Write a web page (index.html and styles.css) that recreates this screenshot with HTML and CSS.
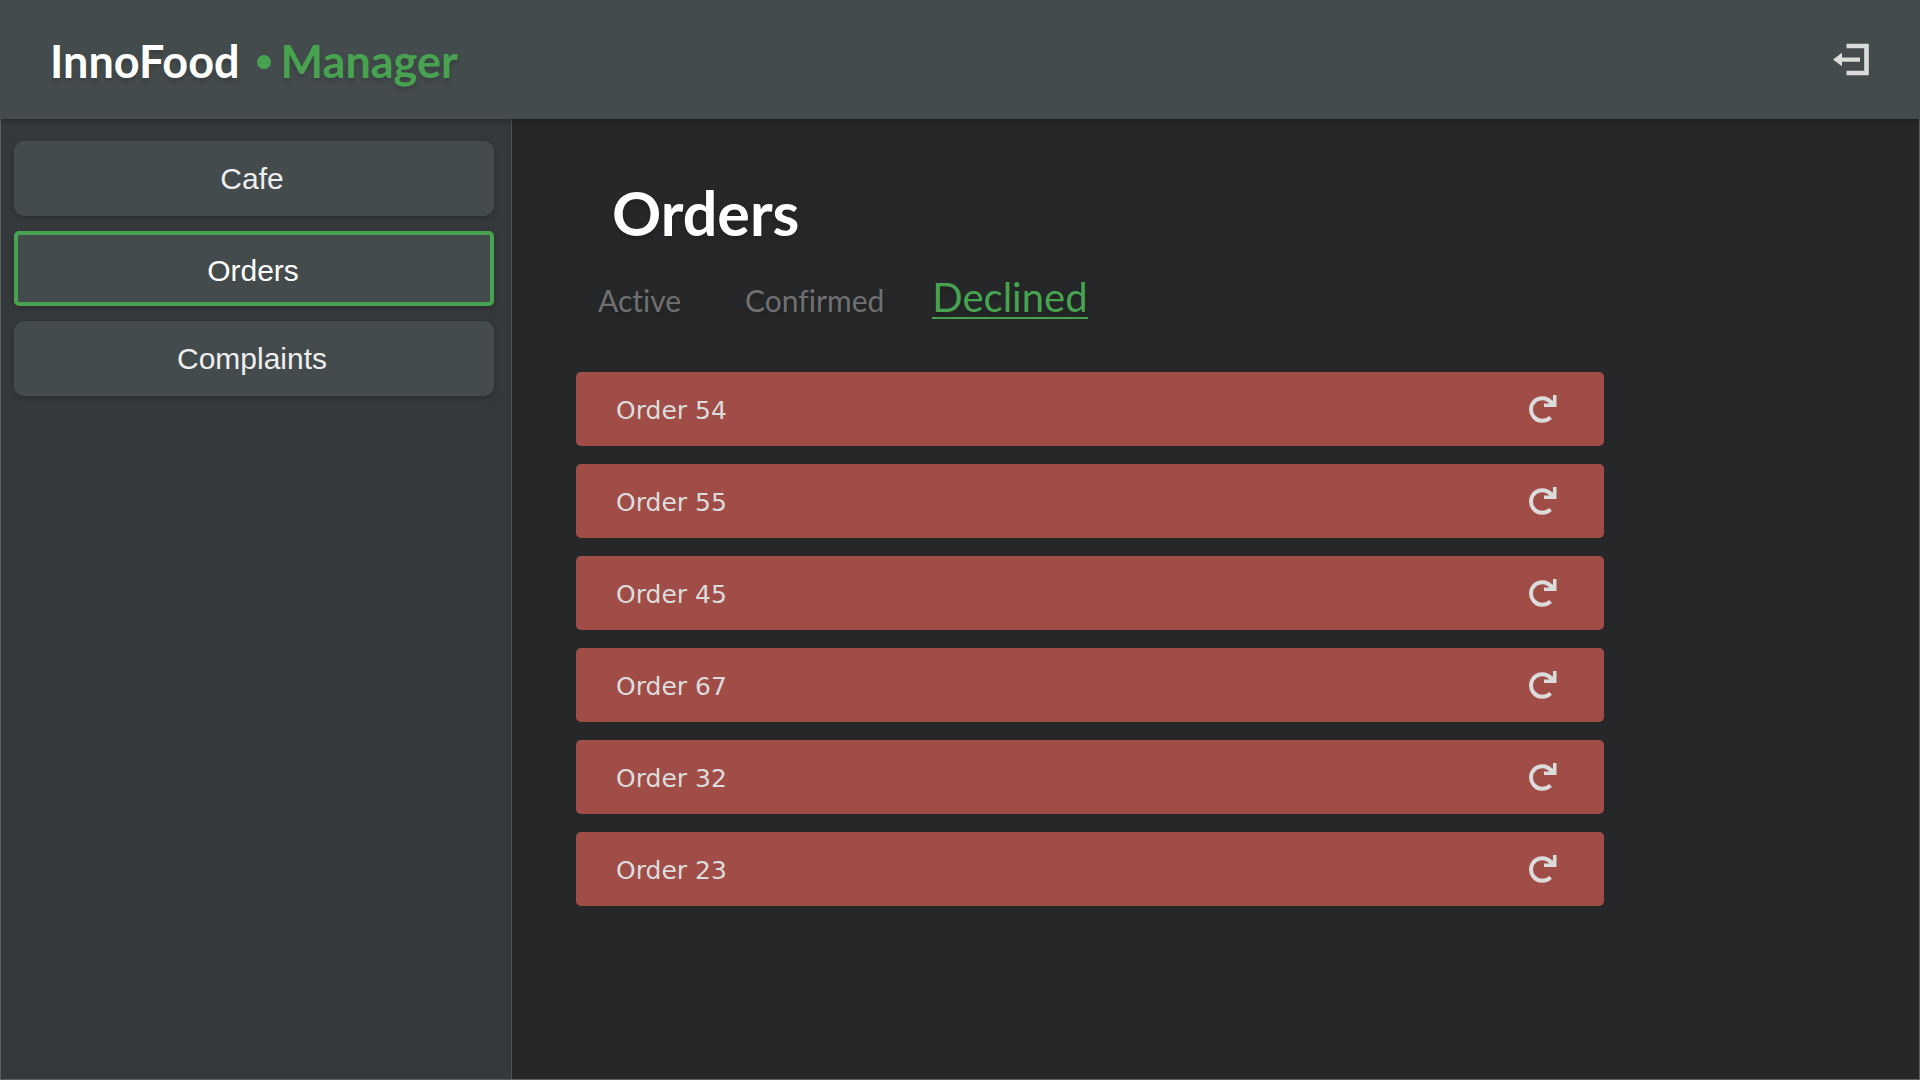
FILE: index.html
```html
<!DOCTYPE html>
<html lang="en">
<head>
<meta charset="utf-8">
<title>InnoFood Manager – Orders</title>
<link rel="stylesheet" href="styles.css">
</head>
<body>
<svg class="sprite" aria-hidden="true">
  <symbol id="restore" viewBox="0 0 28 28">
    <path d="M21.500 22.300A11.300 11.300 0 1 1 23.200 9" fill="none" stroke="currentColor" stroke-width="4"/>
    <path d="M24 0H27.500V12H15V8.500H20.500L24 5Z" fill="currentColor"/>
  </symbol>
</svg>
<header class="topbar">
  <a class="brand" href="#"><span>InnoFood</span><i class="dot"></i><span class="role">Manager</span></a>
  <button class="icon-button" type="button" aria-label="Log out">
    <svg width="36" height="33" viewBox="0 0 36 33"><path d="M13.500 3H33.500V30H13.500" fill="none" stroke="currentColor" stroke-width="4.600"/><path d="M0 16.500L9 9.800V14.500H27V18.800H9V23.200Z" fill="currentColor"/></svg>
  </button>
</header>
<div class="layout">
  <nav class="sidebar">
    <button class="nav-item" type="button">Cafe</button>
    <button class="nav-item active" type="button">Orders</button>
    <button class="nav-item" type="button">Complaints</button>
  </nav>
  <main class="content">
    <h1>Orders</h1>
    <div class="tabs">
      <a class="tab" href="#">Active</a>
      <a class="tab" href="#">Confirmed</a>
      <a class="tab selected" href="#">Declined</a>
    </div>
    <ul class="orders">
      <li class="order"><span class="order-name">Order 54</span><button class="icon-button" type="button" aria-label="Restore order 54"><svg width="28" height="28"><use href="#restore"/></svg></button></li>
      <li class="order"><span class="order-name">Order 55</span><button class="icon-button" type="button" aria-label="Restore order 55"><svg width="28" height="28"><use href="#restore"/></svg></button></li>
      <li class="order"><span class="order-name">Order 45</span><button class="icon-button" type="button" aria-label="Restore order 45"><svg width="28" height="28"><use href="#restore"/></svg></button></li>
      <li class="order"><span class="order-name">Order 67</span><button class="icon-button" type="button" aria-label="Restore order 67"><svg width="28" height="28"><use href="#restore"/></svg></button></li>
      <li class="order"><span class="order-name">Order 32</span><button class="icon-button" type="button" aria-label="Restore order 32"><svg width="28" height="28"><use href="#restore"/></svg></button></li>
      <li class="order"><span class="order-name">Order 23</span><button class="icon-button" type="button" aria-label="Restore order 23"><svg width="28" height="28"><use href="#restore"/></svg></button></li>
    </ul>
  </main>
</div>
</body>
</html>
```
FILE: styles.css
```css
* { box-sizing: border-box; }
body {
  margin: 0;
  min-height: 100vh;
  display: flex;
  flex-direction: column;
  background: #252728;
  color: #fff;
  font-family: "Trebuchet MS", Lato, sans-serif;
  font-variant-ligatures: none;
}
.sprite { display: none; }
.topbar {
  position: relative;
  display: flex;
  align-items: center;
  justify-content: space-between;
  height: 119px;
  padding: 0 51px 0 50px;
  background: #444b4d;
  box-shadow: 0 2px 6px rgba(0, 0, 0, 0.3);
}
.brand {
  display: flex;
  align-items: center;
  padding-top: 2px;
  font-size: 45px;
  line-height: 56px;
  font-weight: 700;
  color: #fff;
  text-decoration: none;
  text-shadow: 0 4px 4px rgba(0, 0, 0, 0.15);
}
.dot {
  width: 14px;
  height: 14px;
  margin: 2px 10px 0 17px;
  border-radius: 50%;
  background: #47a350;
}
.role { color: #47a350; }
.icon-button {
  display: flex;
  padding: 0;
  border: 0;
  background: none;
  color: #dcdcdc;
}
.layout {
  flex: 1;
  display: flex;
  border: 1px solid #5d6061;
  border-top: 0;
}
.sidebar {
  flex: 0 0 511px;
  display: flex;
  flex-direction: column;
  gap: 15px;
  padding: 22px 17px 22px 13px;
  background: #35393b;
  border-right: 1px solid #505354;
}
.nav-item {
  height: 75px;
  padding: 0 4px 0 0;
  border: 0;
  border-radius: 10px;
  background: #444b4d;
  box-shadow: 0 2px 6px rgba(0, 0, 0, 0.2);
  color: #eee;
  font: 30px "Liberation Sans", Arial, sans-serif;
}
.nav-item.active {
  padding: 4px 2px 0 0;
  border: 4px solid #47a350;
  border-radius: 5px;
  color: #fff;
}
.content {
  flex: 1;
  padding: 56px 64px;
}
h1 {
  margin: 0 0 26px 36px;
  font-size: 61px;
  line-height: 76px;
  font-weight: 700;
  text-shadow: 0 4px 4px rgba(0, 0, 0, 0.15);
}
.tabs {
  display: flex;
  align-items: baseline;
  margin-left: 22px;
}
.tab {
  margin-right: 64px;
  font-size: 30px;
  line-height: 32px;
  color: #707071;
  text-decoration: none;
  text-shadow: 0 4px 4px rgba(0, 0, 0, 0.15);
}
.tab + .tab { margin-right: 48px; }
.tab.selected {
  border-bottom: 2px solid #47a350;
  margin-right: 0;
  font-size: 40px;
  line-height: 40px;
  color: #47a350;
}
.orders {
  display: grid;
  gap: 18px;
  max-width: 1028px;
  margin: 53px 0 0;
  padding: 0;
  list-style: none;
}
.order {
  display: flex;
  align-items: center;
  justify-content: space-between;
  height: 74px;
  padding: 0 47px 0 40px;
  border-radius: 5px;
  background: #a04d47;
  color: #dcdcdc;
  font: 25px Verdana, "DejaVu Sans", sans-serif;
}
.order-name { padding-top: 2px; }
```
